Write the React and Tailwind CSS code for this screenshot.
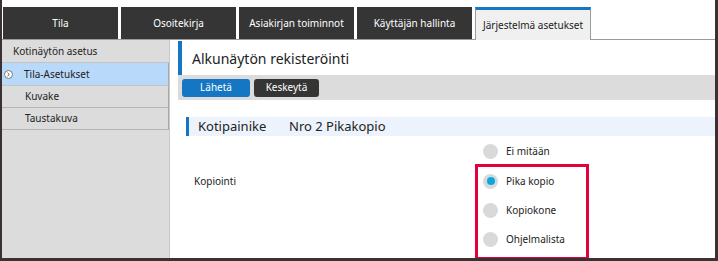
import React from "react";

const tabs = ["Tila", "Osoitekirja", "Asiakirjan toiminnot", "Käyttäjän hallinta"];

const Radio = ({ checked, label }) => (
  <div className="flex items-center gap-[8px] h-[16px] shrink-0">
    <span className="w-[15px] h-[15px] rounded-full bg-[#d9d9d9] flex items-center justify-center">
      {checked && <span className="w-[8px] h-[8px] rounded-full bg-[#0ba8e0]"></span>}
    </span>
    <span className="text-[10px] text-[#222]">{label}</span>
  </div>
);

const App = () => {
  return (
    <div
      className="w-[718px] h-[261px] bg-white border-l-2 border-r-[3px] border-b-[3px] border-[#3a3230] flex flex-col overflow-hidden"
      style={{ fontFamily: '"Noto Sans", "Open Sans", sans-serif' }}
    >
      {/* Tabs */}
      <div className="mt-[7px] h-[33px] shrink-0 flex items-stretch border-b border-[#9a9a9a] pl-[1px]">
        {tabs.map((t) => (
          <div
            key={t}
            className="w-[115px] mr-[3px] bg-[#353535] text-white text-[10px] flex items-center justify-center"
          >
            {t}
          </div>
        ))}
        <div className="w-[116px] -mb-px bg-[#f0f0f0] border-t-[3px] border-t-[#1577c4] border-x border-x-[#9a9a9a] text-[#222] text-[10px] flex items-center justify-center">
          Järjestelmä asetukset
        </div>
      </div>

      <div className="flex flex-1 min-h-0">
        {/* Sidebar */}
        <div className="w-[168px] shrink-0 bg-[#dcdcdc] border-r border-[#c8c8c8] flex flex-col">
          <div className="h-[23px] shrink-0 pl-[11px] flex items-center text-[10px] text-[#222] border-b border-[#c4c4c4]">
            Kotinäytön asetus
          </div>
          <div className="h-[23px] shrink-0 bg-[#b9d9fb] flex items-center text-[10px] text-[#222] border-b border-[#c4c4c4] border-r border-r-[#a9a9a9]">
            <span className="w-[9px] h-[9px] ml-[2px] rounded-full bg-white border border-[#7a7a7a] flex items-center justify-center">
              <svg width="5" height="5" viewBox="0 0 5 5">
                <path d="M1.5 0.8 L3.3 2.5 L1.5 4.2" fill="none" stroke="#555" strokeWidth="1" />
              </svg>
            </span>
            <span className="ml-[11px]">Tila-Asetukset</span>
          </div>
          <div className="h-[22px] shrink-0 pl-[23px] flex items-center text-[10px] text-[#222] border-b border-[#b4b4b4] border-r border-r-[#a9a9a9]">
            Kuvake
          </div>
          <div className="h-[22px] shrink-0 pl-[23px] flex items-center text-[10px] text-[#222] border-b border-[#b4b4b4] border-r border-r-[#a9a9a9]">
            Taustakuva
          </div>
        </div>

        {/* Content */}
        <div className="flex-1 pl-[8px] flex flex-col">
          <div className="h-[34px] shrink-0 mt-[1px] border-l-4 border-[#1577c4] flex items-center pl-[10px] text-[14px] text-[#222]">
            Alkunäytön rekisteröinti
          </div>
          <div className="h-[25px] shrink-0 bg-[#dcdcdc] flex items-center gap-[4px] pl-[4px]">
            <button className="w-[68px] h-[18px] rounded-[3px] bg-[#1577c4] text-white text-[10px]">
              Lähetä
            </button>
            <button className="w-[65px] h-[18px] rounded-[3px] bg-[#353535] text-white text-[10px]">
              Keskeytä
            </button>
          </div>

          <div className="mt-[17px] ml-[8px] h-[19px] shrink-0 bg-[#edf3fc] border-l-[3px] border-[#1577c4] flex items-center text-[13px] text-[#222]">
            <span className="w-[100px] pl-[9px]">Kotipainike</span>
            <span>Nro 2 Pikakopio</span>
          </div>

          <div className="flex mt-[6px] shrink-0">
            <div className="w-[297px] pl-[16px] pt-[32px] text-[10px] text-[#222]">Kopiointi</div>
            <div className="flex flex-col">
              <div className="pl-[8px] h-[18px] flex items-center">
                <Radio label="Ei mitään" />
              </div>
              <div className="mt-[4px] w-[114px] h-[96px] shrink-0 border-[3px] border-[#e4003b] pl-[5px] pt-[6px] flex flex-col gap-[13px]">
                <Radio checked label="Pika kopio" />
                <Radio label="Kopiokone" />
                <Radio label="Ohjelmalista" />
              </div>
            </div>
          </div>
        </div>
      </div>
    </div>
  );
};

export default App;
